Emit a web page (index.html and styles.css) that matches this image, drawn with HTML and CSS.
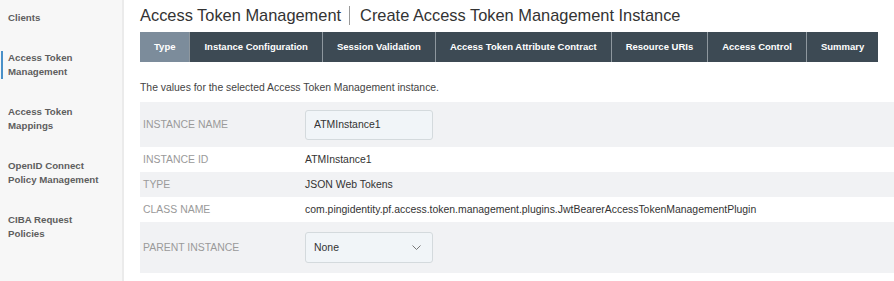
FILE: index.html
```html
<!DOCTYPE html>
<html lang="en">
<head>
    <meta charset="UTF-8">
    <meta name="viewport" content="width=device-width, initial-scale=1.0">
    <title>Create Access Token Management Instance</title>
    <link rel="stylesheet" href="styles.css">
</head>
<body>
    <div class="sidebar">
        <div class="nav-item">Clients</div>
        <div class="nav-item active">Access Token<br>Management</div>
        <div class="nav-item">Access Token<br>Mappings</div>
        <div class="nav-item">OpenID Connect<br>Policy Management</div>
        <div class="nav-item">CIBA Request<br>Policies</div>
    </div>

    <div class="main">
        <h1 class="page-title">Access Token Management<span class="divider"></span>Create Access Token Management Instance</h1>

        <div class="tabs">
            <div class="tab current">Type</div>
            <div class="tab">Instance Configuration</div>
            <div class="tab">Session Validation</div>
            <div class="tab">Access Token Attribute Contract</div>
            <div class="tab">Resource URIs</div>
            <div class="tab">Access Control</div>
            <div class="tab">Summary</div>
        </div>

        <p class="description">The values for the selected Access Token Management instance.</p>

        <div class="details">
            <div class="row shaded tall">
                <div class="label">Instance Name</div>
                <div class="value"><input type="text" class="text-input" value="ATMInstance1"></div>
            </div>
            <div class="row">
                <div class="label">Instance ID</div>
                <div class="value">ATMInstance1</div>
            </div>
            <div class="row shaded">
                <div class="label">Type</div>
                <div class="value">JSON Web Tokens</div>
            </div>
            <div class="row">
                <div class="label">Class Name</div>
                <div class="value">com.pingidentity.pf.access.token.management.plugins.JwtBearerAccessTokenManagementPlugin</div>
            </div>
            <div class="row shaded tall parent">
                <div class="label">Parent Instance</div>
                <div class="value">
                    <div class="dropdown">
                        <span>None</span>
                        <svg width="9" height="5" viewBox="0 0 9 5"><path d="M0.5 0.5 L4.5 4.5 L8.5 0.5" fill="none" stroke="#777" stroke-width="1"/></svg>
                    </div>
                </div>
            </div>
        </div>
    </div>
</body>
</html>
```

FILE: styles.css
```css
body {
    font-family: "Liberation Sans", Arial, sans-serif;
    margin: 0;
    display: flex;
    min-height: 100vh;
    background-color: #fff;
    color: #333;
}
.sidebar {
    width: 122px;
    flex-shrink: 0;
    background-color: #f7f7f7;
    border-right: 2px solid #ebebeb;
    padding-top: 11px;
    display: flex;
    flex-direction: column;
    gap: 26px;
}
.nav-item {
    font-size: 9.7px;
    font-weight: bold;
    line-height: 14px;
    color: #5e5e5e;
    margin-left: 1px;
    padding-left: 5px;
    border-left: 2px solid transparent;
}
.nav-item.active {
    border-left-color: #4a90c8;
}
.main {
    flex: 1;
    padding: 5px 0 0 16px;
}
.page-title {
    font-size: 16.4px;
    font-weight: normal;
    line-height: 20px;
    color: #333;
    margin: 0 0 7px;
    display: flex;
    align-items: center;
}
.divider {
    display: inline-block;
    width: 1px;
    height: 19px;
    background-color: #999;
    margin: 0 10px 0 8px;
}
.tabs {
    display: inline-flex;
    height: 30px;
}
.tab {
    padding: 0 14px;
    line-height: 30px;
    font-size: 9.5px;
    font-weight: bold;
    color: #fff;
    background-color: #3d4a54;
    border-left: 1px solid #8e979e;
    white-space: nowrap;
}
.tab:first-child {
    border-left: none;
}
.tab.current {
    background-color: #7c8c9b;
}
.description {
    font-size: 10.4px;
    line-height: 14px;
    color: #444;
    margin: 19px 0 7px;
}
.row {
    display: grid;
    grid-template-columns: 165px 1fr;
    align-items: center;
    height: 25px;
    font-size: 10.45px;
}
.row.shaded {
    background-color: #f1f2f4;
}
.row.tall {
    height: 45px;
}
.row.parent {
    height: 51px;
}
.label {
    padding-left: 3px;
    color: #9a9a9a;
    text-transform: uppercase;
}
.value {
    color: #333;
    white-space: nowrap;
}
.text-input, .dropdown {
    width: 128px;
    height: 30px;
    box-sizing: border-box;
    background-color: #f1f5f8;
    border: 1px solid #d4dadd;
    border-radius: 3px;
    padding: 0 8px;
    font-family: inherit;
    font-size: 10.45px;
    color: #333;
    margin: 0;
    display: block;
}
.dropdown {
    height: 31px;
    display: flex;
    align-items: center;
    justify-content: space-between;
    padding-right: 11px;
}
```
